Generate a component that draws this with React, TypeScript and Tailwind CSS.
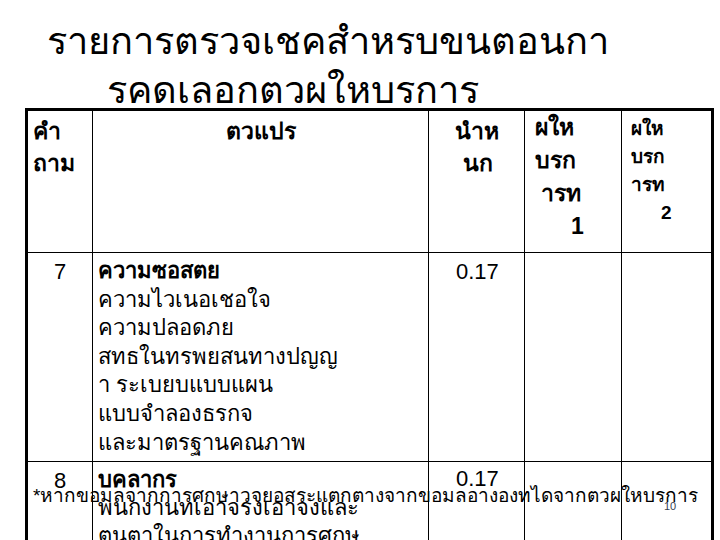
const font = { fontFamily: "'Liberation Sans', 'Noto Sans', sans-serif" };

const row7Lines = [
  "ความไวเนอเชอใจ",
  "ความปลอดภย",
  "สทธในทรพยสนทางปญญ",
  "า ระเบยบแบบแผน",
  "แบบจำลองธรกจ",
  "และมาตรฐานคณภาพ",
];

export default function App() {
  return (
    <div className="relative w-[720px] h-[540px] overflow-hidden bg-white text-black" style={font}>
      {/* Title */}
      <div className="pt-[17px] text-[38px] leading-[49px]">
        <div className="pl-[47px]">รายการตรวจเชคสำหรบขนตอนกา</div>
        <div className="pl-[107px]">รคดเลอกตวผใหบรการ</div>
      </div>

      {/* Table */}
      <table className="absolute left-[25px] top-[108px] border-collapse border-[3px] border-black border-b-0">
        <tbody>
          <tr className="h-[143px] align-top">
            <td className="w-[66px] border-r border-black px-[5px] pt-[4px] text-[23px] leading-[32px] font-bold">
              คำ
              <br />
              ถาม
            </td>
            <td className="w-[336px] border-r border-black pt-[4px] text-center text-[23px] leading-[32px] font-bold">
              ตวแปร
            </td>
            <td className="w-[96px] border-r border-black pt-[4px] pl-[26px] text-[23px] leading-[32px] font-bold">
              นำห
              <br />
              <span className="pl-[8px]">นก</span>
            </td>
            <td className="w-[97px] border-r border-black pt-0 pl-[10px] text-[23px] leading-[33px] font-bold">
              ผให
              <br />
              บรก
              <br />
              <span className="pl-[6px]">ารท</span>
              <br />
              <span className="pl-[36px]">1</span>
            </td>
            <td className="w-[91px] pt-[4px] pl-[9px] text-[19px] leading-[28px] font-bold">
              ผให
              <br />
              บรก
              <br />
              ารท
              <br />
              <span className="pl-[30px]">2</span>
            </td>
          </tr>
          <tr className="h-[209px] align-top border-t border-black">
            <td className="border-r border-black pt-[4px] text-center text-[22px] leading-[29px]">7</td>
            <td className="border-r border-black pl-[5px] pt-[4px] text-[22px] leading-[28.6px]">
              <div className="font-bold">ความซอสตย</div>
              {row7Lines.map((l) => (
                <div key={l}>{l}</div>
              ))}
            </td>
            <td className="border-r border-black pt-[4px] pl-[27px] text-[22px] leading-[29px]">0.17</td>
            <td className="border-r border-black" />
            <td />
          </tr>
          <tr className="h-[120px] align-top border-t border-black">
            <td className="border-r border-black pt-[4px] text-center text-[22px] leading-[29px]">8</td>
            <td className="border-r border-black pl-[5px] pt-[4px] text-[22px] leading-[28px]">
              <div className="font-bold">บคลากร</div>
              <div>พนกงานทเอาจรงเอาจงและ</div>
              <div>ตนตาในการทำงานการศกษ</div>
            </td>
            <td className="border-r border-black pt-[2px] pl-[27px] text-[22px] leading-[29px]">0.17</td>
            <td className="border-r border-black" />
            <td />
          </tr>
        </tbody>
      </table>

      {/* Footnote over the table */}
      <div className="absolute left-[33px] top-[484px] text-[19px] leading-[24px] whitespace-nowrap">
        *หากขอมลจากการศกษาวจยอสระแตกตางจากขอมลอางองทไดจากตวผใหบรการ
      </div>
      <div className="absolute left-[664px] top-[500px] text-[11px] leading-[12px] text-gray-700">10</div>
    </div>
  );
}
